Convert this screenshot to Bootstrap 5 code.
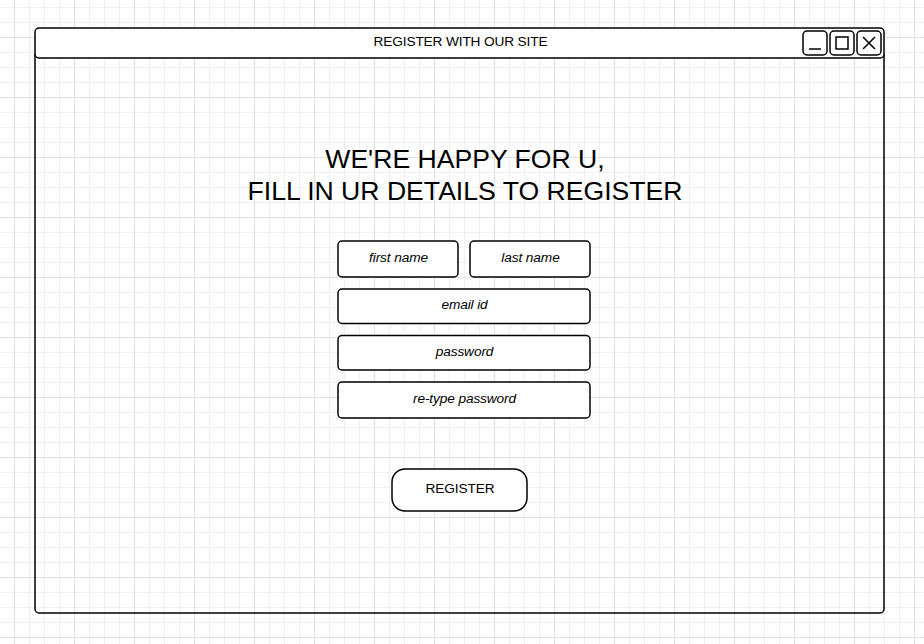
<!DOCTYPE html>
<html lang="en">
<head>
<meta charset="utf-8">
<meta name="viewport" content="width=device-width, initial-scale=1">
<title>Register with our site</title>
<link href="https://cdn.jsdelivr.net/npm/bootstrap@5.3.0/dist/css/bootstrap.min.css" rel="stylesheet">
<style>
  body {
    height: 644px; padding: 27px 39px 30px 34px; overflow: hidden;
    font-family: "Liberation Sans", Arial, sans-serif; font-size: 13.7px; letter-spacing: -.15px; color: #000;
    background-color: #fff;
    background-image:
      linear-gradient(90deg, #e0e0e0 1px, transparent 1px),
      linear-gradient(#e0e0e0 1px, transparent 1px),
      linear-gradient(90deg, #f0f0f0 1px, transparent 1px),
      linear-gradient(#f0f0f0 1px, transparent 1px);
    background-size: 60px 60px, 60px 60px, 15px 15px, 15px 15px;
    background-position: 14px 37px, 14px 37px, 14px 7px, 14px 7px;
  }
  /* Outlines: a 1.5px rounded stroke laid under each component */
  .outline { top: 0; left: 0; width: 100%; height: 100%; overflow: visible; pointer-events: none; }
  .outline rect { x: 1px; y: 1px; width: calc(100% - 2px); height: calc(100% - 2px); rx: 4px; fill: #fff; stroke: #000; stroke-width: 1.5px; }
  /* The title bar draws the window's top edge itself */
  .outline.clear { clip-path: inset(27px 0 0 0); }
  .outline.clear rect { fill: none; }
  .titlebar { height: 32px; padding: 3px 3px 3px 5px; }
  .titlebar-text { line-height: 16px; padding-left: 80px; padding-bottom: 3px; }
  .win-btns { gap: 1px; }
  .win-btns svg { display: block; width: 26px; height: 26px; fill: none; stroke: #000; stroke-width: 1.5px; }
  .headline { margin: 84px 0 0 11px; font-size: 26.6px; line-height: 32px; font-weight: 400; letter-spacing: 0; }
  .fields { width: 254px; margin: 33px 0 0 303px; }
  .name-row { gap: 10px; }
  .field-box { height: 38px; }
  .field-email { height: 36px; margin-top: 10px; }
  .field-email .outline rect { height: calc(100% - 1.5px); }
  .field-pass { height: 37px; margin-top: 10px; }
  .field-pass .outline rect { y: 1.5px; height: calc(100% - 2.5px); }
  .field-again { margin-top: 10px; }
  .field { height: 34px; padding: 0 0 0 1px; border: 0; background: transparent; color: #000; font-size: 13.7px; letter-spacing: -.12px; line-height: 16px; font-style: italic; text-align: center; }
  .field::placeholder { color: #000; opacity: 1; }
  .field-email .field { height: 32px; }
  .btn-register { width: 137px; height: 44px; margin: 49px 0 0 357px; padding: 0 0 3px 1px; border: 0; color: #000; font-size: 13.7px; letter-spacing: -.15px; line-height: 16px; }
  .btn-register .outline rect { rx: 13px; }
</style>
</head>
<body>
<main class="position-relative h-100">
  <svg class="outline clear position-absolute"><rect/></svg>
  <header class="titlebar position-relative d-flex align-items-center">
    <svg class="outline position-absolute"><rect/></svg>
    <div class="titlebar-text position-relative flex-grow-1 text-center">REGISTER WITH OUR SITE</div>
    <div class="win-btns position-relative d-flex">
      <svg><rect x="1" y="1" width="24" height="24" rx="4"/><path d="M7 19H19"/></svg>
      <svg><rect x="1" y="1" width="24" height="24" rx="4"/><path d="M7 7H19V19H7Z"/></svg>
      <svg><rect x="1" y="1" width="24" height="24" rx="4"/><path d="M7 7L19 19M19 7L7 19"/></svg>
    </div>
  </header>
  <h1 class="headline text-center">WE'RE HAPPY FOR U,<br>FILL IN UR DETAILS TO REGISTER</h1>
  <form>
    <div class="fields d-flex flex-column">
      <div class="name-row d-flex">
        <div class="field-box position-relative flex-fill">
          <svg class="outline position-absolute"><rect/></svg>
          <input class="form-control field position-relative" type="text" placeholder="first name" aria-label="first name">
        </div>
        <div class="field-box position-relative flex-fill">
          <svg class="outline position-absolute"><rect/></svg>
          <input class="form-control field position-relative" type="text" placeholder="last name" aria-label="last name">
        </div>
      </div>
      <div class="field-email position-relative">
        <svg class="outline position-absolute"><rect/></svg>
        <input class="form-control field position-relative" type="email" placeholder="email id" aria-label="email id">
      </div>
      <div class="field-pass position-relative">
        <svg class="outline position-absolute"><rect/></svg>
        <input class="form-control field position-relative" type="password" placeholder="password" aria-label="password">
      </div>
      <div class="field-box field-again position-relative">
        <svg class="outline position-absolute"><rect/></svg>
        <input class="form-control field position-relative" type="password" placeholder="re-type password" aria-label="re-type password">
      </div>
    </div>
    <button class="btn btn-register d-block position-relative" type="button">
      <svg class="outline position-absolute"><rect/></svg>
      <span class="position-relative">REGISTER</span>
    </button>
  </form>
</main>
<script src="https://cdn.jsdelivr.net/npm/bootstrap@5.3.0/dist/js/bootstrap.bundle.min.js"></script>
</body>
</html>
